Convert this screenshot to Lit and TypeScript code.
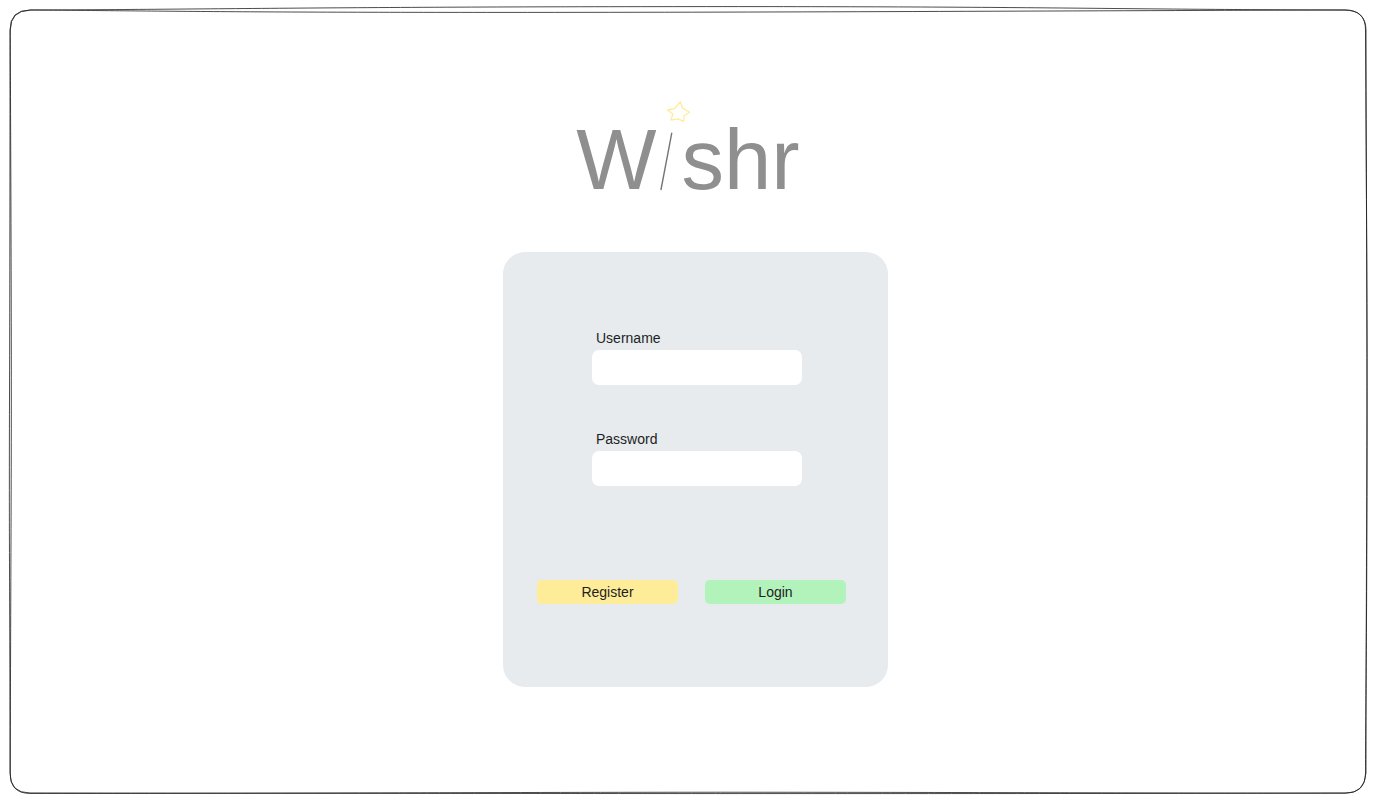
import { LitElement, html, css } from "lit";
import { customElement } from "lit/decorators.js";

@customElement("sketch-frame")
export class SketchFrame extends LitElement {
  static styles = css`
    :host {
      display: block;
    }
    .frame {
      display: block;
      width: 100%;
      height: 100%;
    }
    .stroke {
      fill: none;
      stroke: #1e1e1e;
      stroke-width: 0.8;
      vector-effect: non-scaling-stroke;
    }
  `;

  render() {
    return html`
      <svg class="frame" viewBox="0 0 1380 805" preserveAspectRatio="none" aria-hidden="true">
        <path
          class="stroke"
          d="M30 10 C200 9.5 330 6.8 690 6.6 S1100 9.4 1345 10 Q1365.5 10 1365.5 30 C1366.5 200 1367.3 300 1367 480 S1365.6 700 1365.5 773 Q1365.5 793 1345 793 C1100 794 350 793.5 30 793 Q10 793 10 773 C10 600 9 560 9.5 400 S10 100 10 30 Q10 10 30 10"
        />
        <path
          class="stroke"
          d="M30 10 C130 10.6 210 12.4 500 12.4 S1100 10.6 1345 10 Q1365.8 10.5 1366 30 C1366 200 1367.5 300 1366.8 480 S1366 700 1366 773 Q1364.5 793.5 1345 793.2 C1100 793 850 792 640 792.3 S200 793.5 30 793.4 Q10 793.4 10.3 773 C10.5 600 11.5 500 11.3 350 S10.4 100 10.3 30 Q10.5 10.5 30 10.2"
        />
      </svg>
    `;
  }
}

@customElement("wishr-logo")
export class WishrLogo extends LitElement {
  static styles = css`
    :host {
      display: block;
    }
    .logo {
      display: flex;
      justify-content: center;
      margin: 0;
      font-size: 85px;
      font-weight: 400;
      line-height: 96px;
      color: #8f8f8f;
    }
    .wand {
      flex: none;
      width: 25px;
      height: 96px;
      overflow: visible;
      fill: none;
      stroke-linecap: round;
      stroke-linejoin: round;
    }
    .stick {
      stroke: #757575;
      stroke-width: 1.4;
    }
    .star {
      stroke: #ffec99;
      stroke-width: 1.3;
    }
  `;

  render() {
    return html`
      <h1 class="logo" aria-label="Wishr">
        <span>W</span>
        <svg class="wand" viewBox="0 0 25 96" aria-hidden="true">
          <path class="stick" d="M14.7 21.3 L4 77.5" />
          <path
            class="star"
            d="M23.2 -10.2 L25.8 -3.6 L32.6 0.2 L27.2 3.8 L26.6 9.4 L21 6.8 L14 8 L15.8 2 L10.6 -2 L17.4 -3.4 Z"
          />
        </svg>
        <span>shr</span>
      </h1>
    `;
  }
}

@customElement("login-form")
export class LoginForm extends LitElement {
  static styles = css`
    :host {
      display: block;
    }
    .card {
      box-sizing: border-box;
      padding: 78px 42px 83px 34px;
      border-radius: 22px;
      background: #e7ebee;
    }
    .fields {
      display: flex;
      flex-direction: column;
      gap: 46px;
      margin: 0 44px 94px 55px;
    }
    .field {
      display: flex;
      flex-direction: column;
      gap: 4px;
    }
    .label {
      padding-left: 4px;
      font-size: 14px;
      line-height: 16px;
    }
    .input {
      box-sizing: border-box;
      width: 100%;
      height: 35px;
      padding: 0 10px;
      border: 0;
      border-radius: 7px;
      background: #fff;
      font: inherit;
      font-size: 14px;
      color: inherit;
    }
    .actions {
      display: grid;
      grid-template-columns: 1fr 1fr;
      gap: 27px;
    }
    .button {
      height: 24px;
      padding: 0;
      border: 0;
      border-radius: 5px;
      font: inherit;
      font-size: 14px;
      line-height: 24px;
      color: inherit;
      cursor: pointer;
    }
    .register {
      background: #ffec99;
    }
    .login {
      background: #b2f2bb;
    }
  `;

  render() {
    return html`
      <form class="card" @submit=${(e: Event) => e.preventDefault()}>
        <div class="fields">
          <div class="field">
            <label class="label" for="username">Username</label>
            <input class="input" id="username" type="text" autocomplete="username" />
          </div>
          <div class="field">
            <label class="label" for="password">Password</label>
            <input class="input" id="password" type="password" autocomplete="current-password" />
          </div>
        </div>
        <div class="actions">
          <button class="button register" type="button">Register</button>
          <button class="button login" type="submit">Login</button>
        </div>
      </form>
    `;
  }
}

@customElement("app-root")
export class AppRoot extends LitElement {
  static styles = css`
    :host {
      display: block;
      position: relative;
      min-height: 100vh;
      background: #fff;
      color: #1e1e1e;
      font-family: "Liberation Sans", Arial, sans-serif;
    }
    .backdrop {
      position: absolute;
      inset: 0;
    }
    .page {
      position: relative;
      display: flex;
      justify-content: center;
      padding: 112px 0 64px 11px;
    }
    .column {
      display: flex;
      flex-direction: column;
      gap: 44px;
      width: 385px;
      max-width: 100%;
    }
    .brand {
      padding-right: 15px;
    }
  `;

  render() {
    return html`
      <sketch-frame class="backdrop"></sketch-frame>
      <main class="page">
        <div class="column">
          <wishr-logo class="brand"></wishr-logo>
          <login-form></login-form>
        </div>
      </main>
    `;
  }
}
